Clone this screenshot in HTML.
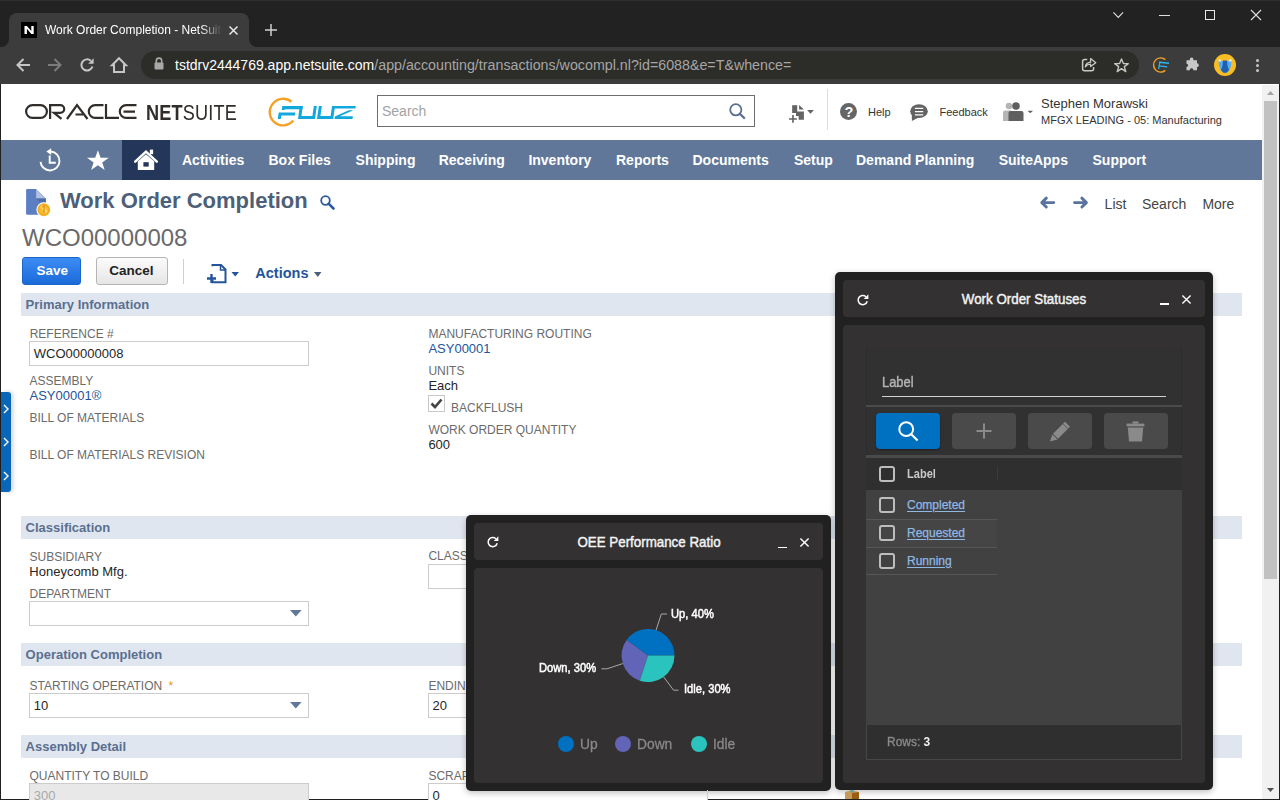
<!DOCTYPE html>
<html><head><meta charset="utf-8">
<style>
*{box-sizing:border-box;margin:0;padding:0}
html,body{width:1280px;height:800px;overflow:hidden;background:#fff;font-family:"Liberation Sans",sans-serif}
.a{position:absolute}
.t{position:absolute;white-space:nowrap}
svg{overflow:visible}
</style></head><body>
<div class="a" style="left:0px;top:0px;width:1280px;height:84px;background:#222222;"></div>
<div class="a" style="left:0px;top:0px;width:1280px;height:1px;background:#2e2e2e;"></div>
<div class="a" style="left:9px;top:13px;width:240px;height:34px;background:#3c3c3c;border-radius:8px 8px 0 0"></div>
<div class="a" style="left:1px;top:39px;width:8px;height:8px;background:#3c3c3c;"></div>
<div class="a" style="left:-7px;top:31px;width:16px;height:16px;background:#222222;border-radius:50%"></div>
<div class="a" style="left:249px;top:39px;width:8px;height:8px;background:#3c3c3c;"></div>
<div class="a" style="left:249px;top:31px;width:16px;height:16px;background:#222222;border-radius:50%"></div>
<div class="a" style="left:0px;top:47px;width:1280px;height:37px;background:#3c3c3c;"></div>
<div class="a" style="left:21px;top:22px;width:16px;height:16px;background:#000;"></div>
<svg class="a" style="left:16px;top:18px" width="30" height="24" viewBox="16 18 30 24"><path d="M24.5 33.9V26H26.9L31.3 31.1V26H33.7V33.9H31.3L26.9 28.8V33.9Z" fill="#fff"/></svg><div class="t" style="left:45px;top:23.84px;font-size:12px;line-height:12px;color:#ffffff;font-weight:normal;width:177px;overflow:hidden;-webkit-mask-image:linear-gradient(90deg,#000 88%,transparent 100%)">Work Order Completion - NetSuite</div>
<svg class="a" style="left:229px;top:25.5px" width="9" height="9" viewBox="0 0 9 9"><path d="M0.5 0.5L8.5 8.5M8.5 0.5L0.5 8.5" stroke="#e8e8e8" stroke-width="1.5"/></svg>
<svg class="a" style="left:265px;top:24px" width="12" height="12" viewBox="0 0 12 12"><path d="M6 0V12M0 6H12" stroke="#d0d0d0" stroke-width="1.5"/></svg>
<svg class="a" style="left:1112.7px;top:12px" width="10.5" height="6" viewBox="0 0 10.5 6"><path d="M0.4 0.4L5.25 5.4L10.1 0.4" stroke="#e0e0e0" stroke-width="1.1" fill="none"/></svg>
<div class="a" style="left:1159px;top:15px;width:11px;height:1px;background:#e0e0e0;"></div>
<div class="a" style="left:1205px;top:10px;width:10px;height:10px;background:transparent;border:1px solid #e8e8e8"></div>
<svg class="a" style="left:1251px;top:10px" width="10" height="10" viewBox="0 0 10 10"><path d="M0 0L10 10M10 0L0 10" stroke="#e0e0e0" stroke-width="1.1"/></svg>
<svg class="a" style="left:16px;top:58px" width="14" height="14" viewBox="0 0 14 14"><path d="M14 7H1.8M7.5 1L1.5 7L7.5 13" stroke="#c6c6c6" stroke-width="2" fill="none"/></svg>
<svg class="a" style="left:48px;top:58px" width="14" height="14" viewBox="0 0 14 14"><path d="M0 7H12.2M6.5 1L12.5 7L6.5 13" stroke="#7c7c7c" stroke-width="2" fill="none"/></svg>
<svg class="a" style="left:80px;top:58px" width="14" height="14" viewBox="0 0 14 14"><path d="M12.4 8.5A5.6 5.6 0 1 1 10.8 2.8" stroke="#c6c6c6" stroke-width="2" fill="none"/><path d="M13.6 0.3V5.8H8.1Z" fill="#c6c6c6"/></svg>
<svg class="a" style="left:111px;top:57px" width="16" height="16" viewBox="0 0 16 16"><path d="M8 1.2L15 8.2H13V15H3V8.2H1Z" stroke="#c6c6c6" stroke-width="2" fill="none" stroke-linejoin="miter"/></svg>
<div class="a" style="left:141px;top:51px;width:998px;height:28px;background:#2c2c28;border-radius:14px"></div>
<svg class="a" style="left:154px;top:57px" width="10" height="13" viewBox="0 0 10 13"><path d="M2.3 6V3.8A2.7 2.7 0 0 1 7.7 3.8V6" stroke="#a8a8a8" stroke-width="1.6" fill="none"/><rect x="0.5" y="5.6" width="9" height="7" rx="1" fill="#a8a8a8"/></svg>
<div class="t" style="left:175px;top:58.15px;font-size:14px;line-height:14px;color:#ffffff;font-weight:normal;">tstdrv2444769.app.netsuite.com<span style="color:#a6a6a6;font-size:14.25px">/app/accounting/transactions/wocompl.nl?id=6088&amp;e=T&amp;whence=</span></div>
<svg class="a" style="left:1076px;top:52px" width="30" height="26" viewBox="1076 52 30 26"><path d="M1087.2 59.6H1084.6Q1082.6 59.6 1082.6 61.6V68.8Q1082.6 70.8 1084.6 70.8H1091.6Q1093.6 70.8 1093.6 68.8V67" fill="none" stroke="#c8c8c8" stroke-width="1.5"/><path d="M1085.3 66.8Q1086 62.6 1090.6 62.2V58.6L1095.8 62.7L1090.6 66.6V64.2Q1087.4 64.2 1085.3 66.8Z" fill="none" stroke="#c8c8c8" stroke-width="1.3" stroke-linejoin="round"/></svg>
<svg class="a" style="left:1114px;top:57.5px" width="15" height="15" viewBox="0 0 15 15"><path d="M7.5 1L9.4 5.6H14.3L10.3 8.6L11.8 13.6L7.5 10.6L3.2 13.6L4.7 8.6L0.7 5.6H5.6Z" stroke="#c6c6c6" stroke-width="1.4" fill="none" stroke-linejoin="round"/></svg>
<svg class="a" style="left:1148px;top:52px" width="96" height="26" viewBox="1148 52 96 26"><path d="M1165.3 59.6A7.1 7.1 0 1 0 1165.3 70.4" fill="none" stroke="#f5a623" stroke-width="1.4"/><path d="M1159.4 61.4L1169.2 62.6L1168.9 64L1159.1 62.9Z" fill="#29b6f0"/><path d="M1159 65.2L1167.3 66.2L1167 67.6L1158.8 66.6Z" fill="#29b6f0"/><path d="M1159.4 61.4L1160.6 61.6L1159.2 69.3L1158 69.1Z" fill="#29b6f0"/><path d="M1189.8 59.2A1.8 1.8 0 0 1 1193.4 59.2V60.2H1197V63.3A1.8 1.8 0 0 1 1197 67V70.2H1193.3V69.4A1.8 1.8 0 0 0 1189.9 69.4V70.2H1186.5V66.9A1.6 1.6 0 0 0 1186.5 63.7V60.2H1189.8Z" fill="#c8c8c8"/><circle cx="1225" cy="65" r="11" fill="#f9bd24"/><path d="M1218.5 61H1231.5L1231 66L1229 71L1226.5 72.5H1223.5L1221 71L1219 66Z" fill="#5aaaf0"/><path d="M1223 60.5H1227L1227.5 66L1229 70L1226.5 72.8H1223.5L1221 70L1222.5 66Z" fill="#1e5fae"/><path d="M1219 58.8L1221.2 60.2V61.5H1218.3ZM1231 58.8L1228.8 60.2V61.5H1231.7Z" fill="#e8f0f8"/></svg>
<div class="a" style="left:1255.7px;top:58.9px;width:3.4px;height:3.4px;background:#c6c6c6;border-radius:50%"></div>
<div class="a" style="left:1255.7px;top:63.8px;width:3.4px;height:3.4px;background:#c6c6c6;border-radius:50%"></div>
<div class="a" style="left:1255.7px;top:68.7px;width:3.4px;height:3.4px;background:#c6c6c6;border-radius:50%"></div>
<div class="a" style="left:0px;top:84px;width:1px;height:716px;background:#202020;"></div>
<div class="a" style="left:1279px;top:84px;width:1px;height:716px;background:#202020;"></div>
<div class="a" style="left:0px;top:799px;width:1280px;height:1px;background:#202020;"></div>
<div class="a" style="left:1262px;top:85px;width:17px;height:714px;background:#f1f1f1;"></div>
<div class="a" style="left:1264px;top:101px;width:13px;height:478px;background:#c1c1c1;"></div>
<svg class="a" style="left:1267px;top:91px" width="7" height="4" viewBox="0 0 7 4"><path d="M0 4L3.5 0L7 4Z" fill="#a3a3a3"/></svg>
<svg class="a" style="left:1267px;top:788px" width="7" height="4" viewBox="0 0 7 4"><path d="M0 0L3.5 4L7 0Z" fill="#505050"/></svg>
<svg class="a" style="left:25px;top:104px" width="112" height="16" viewBox="0 0 112 16"><g fill="none" stroke="#312d2a" stroke-width="2.2"><path d="M7.5 1.1H15.5A6.4 6.4 0 0 1 15.5 13.9H7.5A6.4 6.4 0 0 1 7.5 1.1Z"/><path d="M25.1 15V1.1H35.3A3.9 3.9 0 0 1 35.3 8.9H29L36.5 14.9"/><path d="M42 15L52 1.1L62.5 15M50.5 10.5H58"/><path d="M78.5 1.1H70.2A6.4 6.4 0 0 0 70.2 13.9H78.5"/><path d="M81 0V13.9H94"/><path d="M111.5 1.1H101.2A5.4 5.4 0 0 0 101.2 13.9H111.5M98.5 7.6H110"/></g></svg>
<div class="t" style="left:146px;top:101.55px;font-size:21.2px;line-height:21.2px;color:#312d2a;font-weight:normal;transform:scaleX(0.855);transform-origin:0 0;letter-spacing:0.2px"><b>NET</b>SUITE</div>
<svg class="a" style="left:260px;top:92px" width="110" height="40" viewBox="260 92 110 40"><path d="M291.5 101.8A13.3 13.3 0 1 0 293.3 120.6" fill="none" stroke="#f4a024" stroke-width="2.4"/><g fill="#12a8dc" transform="translate(0 119) skewX(-8) translate(0 -119)"><path d="M280.5 106H301V109.3H283.5V110H280.5Z"/><path d="M277.8 112.6H294.5V115.4H280.8V119H277.8Z"/><path d="M298 106H301V116H312V106H315V119H298Z"/><path d="M317 106H320V116H330.2V106H333.2V119H317Z"/><path d="M331 106H354V108.6H331Z"/><path d="M347.5 110.2H352L339.5 116.2H352.5V119H334.5V116.4Z"/></g></svg>
<div class="a" style="left:377px;top:95px;width:378px;height:32px;background:#fff;border:1px solid #6e6e6e"></div>
<div class="t" style="left:382px;top:104.15px;font-size:14px;line-height:14px;color:#a3a3a3;font-weight:normal;">Search</div>
<svg class="a" style="left:729px;top:103px" width="17" height="17" viewBox="0 0 17 17"><circle cx="6.8" cy="6.8" r="5.6" fill="none" stroke="#5a6f8f" stroke-width="1.8"/><path d="M10.8 10.8L15.8 15.6" stroke="#5a6f8f" stroke-width="2.2"/></svg>
<svg class="a" style="left:785px;top:100px" width="35" height="26" viewBox="785 100 35 26"><path d="M792.15 105.2H797.2V113H792.15Z" fill="#646464"/><path d="M799.1 105L803.9 109.6H799.1Z" fill="#646464"/><path d="M796 111.4H803.9V119.7H798.65V115.9H796Z" fill="#646464"/><path d="M789.1 118.2H796.9V119.8H789.1ZM792.15 115.1H793.8V122.75H792.15Z" fill="#646464"/><path d="M807.1 110.1H813.9L810.5 113.8Z" fill="#646464"/></svg>
<div class="a" style="left:827px;top:89px;width:1px;height:41px;background:#dddddd;"></div>
<div class="a" style="left:840px;top:103px;width:17px;height:17px;background:#666;border-radius:50%"></div>
<div class="t" style="left:844.6px;top:104.93px;font-size:14.5px;line-height:14.5px;color:#fff;font-weight:bold;">?</div>
<div class="t" style="left:868px;top:106.69px;font-size:11px;line-height:11px;color:#333;font-weight:normal;">Help</div>
<svg class="a" style="left:900px;top:98px" width="40" height="28" viewBox="900 98 40 28"><ellipse cx="919" cy="111.2" rx="8.8" ry="6.9" fill="#636363"/><path d="M911.8 114.5L911.9 120.9L919 117.2Z" fill="#636363"/><path d="M914.9 108.3H923.2M914.9 111.6H923.2M914.9 114.9H923.2" stroke="#fff" stroke-width="1.3"/></svg><div class="t" style="left:939.5px;top:106.69px;font-size:11px;line-height:11px;color:#333;font-weight:normal;">Feedback</div>
<svg class="a" style="left:1002px;top:102px" width="36" height="19" viewBox="0 0 36 19"><circle cx="7" cy="4" r="3.3" fill="#b5b5b5"/><path d="M1 19V10.5Q1 8.5 3 8.5H9V19Z" fill="#b5b5b5"/><circle cx="14" cy="4" r="3.8" fill="#5f5f5f"/><path d="M6.5 19V11Q6.5 9 8.5 9H19.5Q21.5 9 21.5 11V19Z" fill="#5f5f5f"/><path d="M25.5 8.7H31L28.25 11.3Z" fill="#5f5f5f"/></svg>
<div class="t" style="left:1041px;top:96.50px;font-size:13px;line-height:13px;color:#333;font-weight:normal;">Stephen Morawski</div>
<div class="t" style="left:1041px;top:114.79px;font-size:11px;line-height:11px;color:#333;font-weight:normal;">MFGX LEADING - 05: Manufacturing</div>
<div class="a" style="left:1px;top:140px;width:1261px;height:40px;background:#607799;"></div>
<div class="a" style="left:122px;top:140px;width:48px;height:40px;background:#243659;"></div>
<svg class="a" style="left:30px;top:142px" width="140" height="36" viewBox="30 142 140 36"><path d="M50.83 151.5A9.5 9.5 0 1 1 40.54 161.83" fill="none" stroke="#fff" stroke-width="1.9"/><path d="M46.3 151.6L51.2 148.3V154.9Z" fill="#fff"/><path d="M49.7 155.4V162.8H55.8" fill="none" stroke="#fff" stroke-width="1.9"/><path d="M97.9 150.2L100.6 157.8H108.8L102.2 162.5L104.7 170L97.9 165.3L91.1 170L93.6 162.5L87 157.8H95.2Z" fill="#fff"/><path d="M135.2 161.6L146 151.6L156.8 161.6" fill="none" stroke="#fff" stroke-width="2.5" stroke-linecap="round" stroke-linejoin="miter"/><rect x="149.8" y="149.6" width="3.3" height="4.6" fill="#fff"/><path d="M137.8 161.2L146 154.2L154.2 161.2V170H137.8Z" fill="#fff"/><rect x="143.4" y="162.2" width="5.3" height="4.4" fill="#243659"/></svg>
<div class="t" style="left:182px;top:153.35px;font-size:14px;line-height:14px;color:#fff;font-weight:bold;">Activities</div>
<div class="t" style="left:268.5px;top:153.35px;font-size:14px;line-height:14px;color:#fff;font-weight:bold;">Box Files</div>
<div class="t" style="left:355.6px;top:153.35px;font-size:14px;line-height:14px;color:#fff;font-weight:bold;">Shipping</div>
<div class="t" style="left:438.7px;top:153.35px;font-size:14px;line-height:14px;color:#fff;font-weight:bold;">Receiving</div>
<div class="t" style="left:528.4px;top:153.35px;font-size:14px;line-height:14px;color:#fff;font-weight:bold;">Inventory</div>
<div class="t" style="left:616px;top:153.35px;font-size:14px;line-height:14px;color:#fff;font-weight:bold;">Reports</div>
<div class="t" style="left:692.5px;top:153.35px;font-size:14px;line-height:14px;color:#fff;font-weight:bold;">Documents</div>
<div class="t" style="left:794px;top:153.35px;font-size:14px;line-height:14px;color:#fff;font-weight:bold;">Setup</div>
<div class="t" style="left:856px;top:153.35px;font-size:14px;line-height:14px;color:#fff;font-weight:bold;">Demand Planning</div>
<div class="t" style="left:998.7px;top:153.35px;font-size:14px;line-height:14px;color:#fff;font-weight:bold;">SuiteApps</div>
<div class="t" style="left:1092.5px;top:153.35px;font-size:14px;line-height:14px;color:#fff;font-weight:bold;">Support</div>
<svg class="a" style="left:20px;top:185px" width="40" height="35" viewBox="20 185 40 35"><path d="M27.2 188.9H36.1L45.8 198.6V213.7Q45.8 214.75 44.8 214.75H27.2Q26.1 214.75 26.1 213.7V190Q26.1 188.9 27.2 188.9Z" fill="#5b7fc2"/><path d="M36.1 188.9L45.8 198.6H36.1Z" fill="#b1c1e1"/><path d="M36.1 198.6H45.8V201.9H39.5Z" fill="#4d6ca8"/><circle cx="43.8" cy="209.7" r="7.4" fill="#fff"/><circle cx="43.8" cy="209.7" r="6.5" fill="#f8bd2c"/><path d="M39.5 206L46 213.5L47.5 211L42 204.5Z" fill="#fde49a" opacity="0.7"/><circle cx="43.8" cy="209.7" r="5.1" fill="none" stroke="#eba322" stroke-width="1"/><path d="M42.2 207.3L44.1 206V213" fill="none" stroke="#e39514" stroke-width="1.3"/></svg>
<div class="t" style="left:60px;top:190.18px;font-size:22px;line-height:22px;color:#4d5f79;font-weight:bold;">Work Order Completion</div>
<svg class="a" style="left:320px;top:195px" width="15" height="15" viewBox="0 0 15 15"><circle cx="5.5" cy="5.5" r="4.3" fill="none" stroke="#2d5a9b" stroke-width="1.8"/><path d="M8.6 8.6L13.5 13.5" stroke="#2d5a9b" stroke-width="2.6" stroke-linecap="round"/></svg>
<svg class="a" style="left:1030px;top:188px" width="70" height="28" viewBox="1030 188 70 28"><path d="M1053.8 202.6H1042.2M1046.3 198.1L1041.8 202.6L1046.3 207" fill="none" stroke="#58739e" stroke-width="2.9" stroke-linecap="round" stroke-linejoin="round"/><path d="M1074.5 202.6H1086.1M1081.9 198.1L1086.4 202.6L1081.9 207" fill="none" stroke="#58739e" stroke-width="2.9" stroke-linecap="round" stroke-linejoin="round"/></svg>
<div class="t" style="left:1104.6px;top:196.65px;font-size:14px;line-height:14px;color:#444;font-weight:normal;">List</div>
<div class="t" style="left:1142px;top:196.65px;font-size:14px;line-height:14px;color:#444;font-weight:normal;">Search</div>
<div class="t" style="left:1202.4px;top:196.65px;font-size:14px;line-height:14px;color:#444;font-weight:normal;">More</div>
<div class="t" style="left:22px;top:225.68px;font-size:24px;line-height:24px;color:#6a6a6a;font-weight:normal;">WCO00000008</div>
<div class="a" style="left:22px;top:257px;width:59px;height:28px;background:linear-gradient(#3d8cf5,#1a6ad9);border:1px solid #1b64c8;border-radius:3px"></div>
<div class="t" style="left:36.5px;top:264.17px;font-size:13.5px;line-height:13.5px;color:#fff;font-weight:bold;">Save</div>
<div class="a" style="left:96px;top:257px;width:72px;height:28px;background:linear-gradient(#fbfbfb,#e6e6e6);border:1px solid #b5b5b5;border-radius:3px"></div>
<div class="t" style="left:109.3px;top:264.17px;font-size:13.5px;line-height:13.5px;color:#222;font-weight:bold;">Cancel</div>
<div class="a" style="left:183px;top:259px;width:1px;height:25px;background:#cfcfcf;"></div>
<svg class="a" style="left:206px;top:264px" width="34" height="20" viewBox="0 0 34 20"><path d="M6.5 2.2V1H15L19.5 5.5V18.2H6.5V16" fill="none" stroke="#24549c" stroke-width="2"/><path d="M14.5 1V6H19.5" fill="none" stroke="#24549c" stroke-width="1.5"/><path d="M1 14.5H10M5.5 10V19" stroke="#24549c" stroke-width="2.4"/><path d="M25.5 8H33L29.25 12.5Z" fill="#24549c"/></svg>
<div class="t" style="left:255.3px;top:266.23px;font-size:14.5px;line-height:14.5px;color:#24549c;font-weight:bold;">Actions</div>
<svg class="a" style="left:313.5px;top:272px" width="8" height="5" viewBox="0 0 8 5"><path d="M0 0H7.5L3.75 5Z" fill="#4d5f79"/></svg>
<div class="a" style="left:21px;top:293px;width:1221px;height:23px;background:#e0e6ef;"></div>
<div class="t" style="left:25.6px;top:298.10px;font-size:13px;line-height:13px;color:#5a6f8f;font-weight:bold;">Primary Information</div>
<div class="t" style="left:29.7px;top:327.59px;font-size:12px;line-height:12px;color:#6b6b6b;font-weight:normal;">REFERENCE #</div>
<div class="a" style="left:29px;top:341px;width:280px;height:25px;background:#fff;border:1px solid #cccccc"></div>
<div class="t" style="left:33.75px;top:346.50px;font-size:13px;line-height:13px;color:#262626;font-weight:normal;">WCO00000008</div>
<div class="t" style="left:29.5px;top:374.59px;font-size:12px;line-height:12px;color:#6b6b6b;font-weight:normal;">ASSEMBLY</div>
<div class="t" style="left:29.5px;top:388.75px;font-size:13px;line-height:13px;color:#24549c;font-weight:normal;">ASY00001&reg;</div>
<div class="t" style="left:29.5px;top:412.04px;font-size:12px;line-height:12px;color:#6b6b6b;font-weight:normal;">BILL OF MATERIALS</div>
<div class="t" style="left:29.5px;top:449.04px;font-size:12px;line-height:12px;color:#6b6b6b;font-weight:normal;">BILL OF MATERIALS REVISION</div>
<div class="t" style="left:428.4px;top:327.54px;font-size:12px;line-height:12px;color:#6b6b6b;font-weight:normal;">MANUFACTURING ROUTING</div>
<div class="t" style="left:428.4px;top:341.60px;font-size:13px;line-height:13px;color:#24549c;font-weight:normal;">ASY00001</div>
<div class="t" style="left:428.4px;top:365.34px;font-size:12px;line-height:12px;color:#6b6b6b;font-weight:normal;">UNITS</div>
<div class="t" style="left:428.4px;top:378.70px;font-size:13px;line-height:13px;color:#262626;font-weight:normal;">Each</div>
<div class="a" style="left:428px;top:395px;width:17px;height:17px;background:#fff;border:1px solid #c8c8c8"></div>
<svg class="a" style="left:430px;top:398px" width="13" height="11" viewBox="0 0 13 11"><path d="M1.5 5.5L5 9L11.5 1.5" fill="none" stroke="#444" stroke-width="2.6"/></svg>
<div class="t" style="left:451px;top:402.24px;font-size:12px;line-height:12px;color:#6b6b6b;font-weight:normal;">BACKFLUSH</div>
<div class="t" style="left:428.4px;top:424.24px;font-size:12px;line-height:12px;color:#6b6b6b;font-weight:normal;">WORK ORDER QUANTITY</div>
<div class="t" style="left:428.4px;top:437.50px;font-size:13px;line-height:13px;color:#262626;font-weight:normal;">600</div>
<div class="a" style="left:21px;top:516px;width:1221px;height:23px;background:#e0e6ef;"></div>
<div class="t" style="left:25.6px;top:521.10px;font-size:13px;line-height:13px;color:#5a6f8f;font-weight:bold;">Classification</div>
<div class="t" style="left:29.5px;top:550.54px;font-size:12px;line-height:12px;color:#6b6b6b;font-weight:normal;">SUBSIDIARY</div>
<div class="t" style="left:29.3px;top:565.00px;font-size:13px;line-height:13px;color:#262626;font-weight:normal;">Honeycomb Mfg.</div>
<div class="t" style="left:29.5px;top:587.59px;font-size:12px;line-height:12px;color:#6b6b6b;font-weight:normal;">DEPARTMENT</div>
<div class="a" style="left:29px;top:601px;width:280px;height:25px;background:#fff;border:1px solid #cccccc"></div>
<svg class="a" style="left:290px;top:610px" width="12" height="7" viewBox="0 0 12 7"><path d="M0 0H11.6L5.8 6.5Z" fill="#607799"/></svg>
<div class="t" style="left:428.4px;top:550.44px;font-size:12px;line-height:12px;color:#6b6b6b;font-weight:normal;">CLASS</div>
<div class="a" style="left:428px;top:564px;width:280px;height:25px;background:#fff;border:1px solid #cccccc"></div>
<svg class="a" style="left:689px;top:573px" width="12" height="7" viewBox="0 0 12 7"><path d="M0 0H11.6L5.8 6.5Z" fill="#607799"/></svg>
<div class="a" style="left:21px;top:643px;width:1221px;height:23px;background:#e0e6ef;"></div>
<div class="t" style="left:25.6px;top:648.10px;font-size:13px;line-height:13px;color:#5a6f8f;font-weight:bold;">Operation Completion</div>
<div class="t" style="left:29.5px;top:680.34px;font-size:12px;line-height:12px;color:#6b6b6b;font-weight:normal;">STARTING OPERATION <span style="color:#e2951e;margin-left:3px">*</span></div>
<div class="a" style="left:29px;top:693px;width:280px;height:25px;background:#fff;border:1px solid #cccccc"></div>
<svg class="a" style="left:290px;top:702px" width="12" height="7" viewBox="0 0 12 7"><path d="M0 0H11.6L5.8 6.5Z" fill="#607799"/></svg>
<div class="t" style="left:33.75px;top:699.20px;font-size:13px;line-height:13px;color:#262626;font-weight:normal;">10</div>
<div class="t" style="left:428.4px;top:680.34px;font-size:12px;line-height:12px;color:#6b6b6b;font-weight:normal;">ENDING OPERATION</div>
<div class="a" style="left:428px;top:693px;width:280px;height:25px;background:#fff;border:1px solid #cccccc"></div>
<svg class="a" style="left:689px;top:702px" width="12" height="7" viewBox="0 0 12 7"><path d="M0 0H11.6L5.8 6.5Z" fill="#607799"/></svg>
<div class="t" style="left:432.5px;top:699.20px;font-size:13px;line-height:13px;color:#262626;font-weight:normal;">20</div>
<div class="a" style="left:21px;top:735px;width:1221px;height:23px;background:#e0e6ef;"></div>
<div class="t" style="left:25.6px;top:740.10px;font-size:13px;line-height:13px;color:#5a6f8f;font-weight:bold;">Assembly Detail</div>
<div class="t" style="left:29.5px;top:769.59px;font-size:12px;line-height:12px;color:#6b6b6b;font-weight:normal;">QUANTITY TO BUILD</div>
<div class="a" style="left:29px;top:783px;width:280px;height:25px;background:#e8e8e8;border:1px solid #cccccc"></div>
<div class="t" style="left:33.75px;top:789.00px;font-size:13px;line-height:13px;color:#a8a8a8;font-weight:normal;">300</div>
<div class="t" style="left:428.4px;top:769.59px;font-size:12px;line-height:12px;color:#6b6b6b;font-weight:normal;">SCRAP QUANTITY</div>
<div class="a" style="left:428px;top:783px;width:280px;height:25px;background:#fff;border:1px solid #cccccc"></div>
<div class="t" style="left:432.5px;top:789.00px;font-size:13px;line-height:13px;color:#262626;font-weight:normal;">0</div>
<div class="a" style="left:1px;top:392px;width:10px;height:100px;background:#0a66b8;border-radius:0 3px 3px 0;box-shadow:2px 0 4px rgba(0,0,0,0.18)"></div>
<svg class="a" style="left:3px;top:403.7px" width="6" height="10" viewBox="0 0 6 10"><path d="M1 1L5 5L1 9" fill="none" stroke="#fff" stroke-width="1.4"/></svg>
<svg class="a" style="left:3px;top:436.8px" width="6" height="10" viewBox="0 0 6 10"><path d="M1 1L5 5L1 9" fill="none" stroke="#fff" stroke-width="1.4"/></svg>
<svg class="a" style="left:3px;top:470.6px" width="6" height="10" viewBox="0 0 6 10"><path d="M1 1L5 5L1 9" fill="none" stroke="#fff" stroke-width="1.4"/></svg>
<div class="a" style="left:466px;top:515px;width:365px;height:276px;background:#212121;border-radius:5px;box-shadow:0 2px 6px rgba(0,0,0,0.25)"></div>
<div class="a" style="left:474px;top:523px;width:349px;height:37px;background:#333132;border-radius:4px"></div>
<div class="a" style="left:474px;top:568px;width:349px;height:215px;background:#333132;border-radius:4px"></div>
<svg class="a" style="left:487px;top:536px" width="12" height="12" viewBox="0 0 12 12"><path d="M10.2 7.2A4.6 4.6 0 1 1 8.9 2.7" fill="none" stroke="#fff" stroke-width="1.5"/><path d="M11.4 0.2V4.9H6.7Z" fill="#fff"/></svg>
<div class="t" style="left:648.5px;top:533.90px;font-size:15px;line-height:15px;color:#f4f4f4;font-weight:normal;transform:translateX(-50%) scaleX(0.89);-webkit-text-stroke:0.45px #f4f4f4;">OEE Performance Ratio</div>
<div class="a" style="left:778px;top:546.5px;width:8.5px;height:1.6px;background:#fff;"></div>
<svg class="a" style="left:799.5px;top:537.5px" width="9" height="9" viewBox="0 0 9 9"><path d="M0.4 0.4L8.6 8.6M8.6 0.4L0.4 8.6" stroke="#fff" stroke-width="1.4"/></svg>
<svg class="a" style="left:0;top:0" width="1280" height="800" viewBox="0 0 1280 800"><path d="M648 655.5L674.50 655.50A26.5 26.5 0 0 0 626.56 639.92Z" fill="#0070c0"/><path d="M648 655.5L626.56 639.92A26.5 26.5 0 0 0 639.81 680.70Z" fill="#6264b8"/><path d="M648 655.5L639.81 680.70A26.5 26.5 0 0 0 674.50 655.50Z" fill="#2ac3bd"/><path d="M656 630.3L661.3 614H667M622.7 663.6L607 668.8H601.4M663.7 677L673.6 690.2H678.5" fill="none" stroke="#aaa" stroke-width="1"/></svg>
<div class="t" style="left:671.4px;top:607.84px;font-size:12px;line-height:12px;color:#fff;font-weight:normal;transform:scaleX(0.93);transform-origin:0 0;-webkit-text-stroke:0.5px #fff">Up, 40%</div>
<div class="t" style="left:539px;top:662.24px;font-size:12px;line-height:12px;color:#fff;font-weight:normal;transform:scaleX(0.93);transform-origin:0 0;-webkit-text-stroke:0.5px #fff">Down, 30%</div>
<div class="t" style="left:683.7px;top:683.24px;font-size:12px;line-height:12px;color:#fff;font-weight:normal;transform:scaleX(0.93);transform-origin:0 0;-webkit-text-stroke:0.5px #fff">Idle, 30%</div>
<div class="a" style="left:558px;top:736px;width:16px;height:16px;background:#0070c0;border-radius:50%"></div>
<div class="t" style="left:579.7px;top:736.05px;font-size:15px;line-height:15px;color:#8a8a8a;font-weight:normal;transform:scaleX(0.92);transform-origin:0 0;-webkit-text-stroke:0.3px #8a8a8a">Up</div>
<div class="a" style="left:615px;top:736px;width:16px;height:16px;background:#6264b8;border-radius:50%"></div>
<div class="t" style="left:636.7px;top:736.05px;font-size:15px;line-height:15px;color:#8a8a8a;font-weight:normal;transform:scaleX(0.92);transform-origin:0 0;-webkit-text-stroke:0.3px #8a8a8a">Down</div>
<div class="a" style="left:691px;top:736px;width:16px;height:16px;background:#2ac3bd;border-radius:50%"></div>
<div class="t" style="left:713.3px;top:736.05px;font-size:15px;line-height:15px;color:#8a8a8a;font-weight:normal;transform:scaleX(0.92);transform-origin:0 0;-webkit-text-stroke:0.3px #8a8a8a">Idle</div>
<div class="a" style="left:835px;top:272px;width:378px;height:518px;background:#212121;border-radius:5px;box-shadow:0 2px 6px rgba(0,0,0,0.25)"></div>
<div class="a" style="left:843px;top:280px;width:362px;height:37px;background:#333132;border-radius:4px"></div>
<div class="a" style="left:843px;top:325px;width:362px;height:458px;background:#333132;border-radius:4px"></div>
<svg class="a" style="left:856.5px;top:293.5px" width="12" height="12" viewBox="0 0 12 12"><path d="M10.2 7.2A4.6 4.6 0 1 1 8.9 2.7" fill="none" stroke="#fff" stroke-width="1.5"/><path d="M11.4 0.2V4.9H6.7Z" fill="#fff"/></svg>
<div class="t" style="left:1024px;top:291.20px;font-size:15px;line-height:15px;color:#f4f4f4;font-weight:normal;transform:translateX(-50%) scaleX(0.89);-webkit-text-stroke:0.45px #f4f4f4;">Work Order Statuses</div>
<div class="a" style="left:1160px;top:303px;width:8.5px;height:1.6px;background:#fff;"></div>
<svg class="a" style="left:1181.7px;top:294.5px" width="9" height="9" viewBox="0 0 9 9"><path d="M0.4 0.4L8.6 8.6M8.6 0.4L0.4 8.6" stroke="#fff" stroke-width="1.4"/></svg>
<div class="a" style="left:866px;top:348px;width:316px;height:412px;background:#323131;border-left:1px solid #2c2c2c;border-right:1px solid #2c2c2c"></div>
<div class="t" style="left:882px;top:375.15px;font-size:14px;line-height:14px;color:#b4b4b4;font-weight:normal;transform:scaleX(0.92);transform-origin:0 0;-webkit-text-stroke:0.4px #b4b4b4">Label</div>
<div class="a" style="left:882px;top:395.5px;width:284px;height:1.6px;background:#d0d0d0;"></div>
<div class="a" style="left:866px;top:405px;width:316px;height:2px;background:#4a4a4a;"></div>
<div class="a" style="left:876px;top:413px;width:64px;height:36px;background:#0070c0;border-radius:4px;box-shadow:0 1px 2px rgba(0,0,0,0.4)"></div>
<svg class="a" style="left:897.5px;top:420.5px" width="21" height="21" viewBox="0 0 21 21"><circle cx="8.2" cy="8.2" r="6.9" fill="none" stroke="#fff" stroke-width="2"/><path d="M13 13L19.6 19.6" stroke="#fff" stroke-width="2.1"/></svg>
<div class="a" style="left:952px;top:413px;width:64px;height:36px;background:#4b4a4a;border-radius:4px"></div>
<div class="a" style="left:1028px;top:413px;width:64px;height:36px;background:#4b4a4a;border-radius:4px"></div>
<div class="a" style="left:1104px;top:413px;width:64px;height:36px;background:#4b4a4a;border-radius:4px"></div>
<svg class="a" style="left:975px;top:422px" width="18" height="18" viewBox="0 0 18 18"><path d="M9 1.5V16.5M1.5 9H16.5" stroke="#8a8a8a" stroke-width="2"/></svg>
<svg class="a" style="left:1049px;top:420.5px" width="22" height="21" viewBox="0 0 22 21"><path d="M16 0.8L21 5.8L9 17.8L4 12.8Z" fill="#8a8a8a"/><path d="M3.5 13.5L8.5 18.5L0.8 20.5Z" fill="#8a8a8a"/><path d="M14 2.8L19 7.8" stroke="#4b4a4a" stroke-width="0.8"/></svg>
<svg class="a" style="left:1126px;top:420.5px" width="19" height="21" viewBox="0 0 19 21"><path d="M0.6 2.6H18.4V5.4H0.6Z" fill="#8a8a8a"/><path d="M6.5 0.4H12.5V2.6H6.5Z" fill="#8a8a8a"/><path d="M1.8 6.5H17.2L16 20.5H3Z" fill="#8a8a8a"/></svg>
<div class="a" style="left:866px;top:455px;width:316px;height:2.5px;background:#4a4a4a;"></div>
<div class="a" style="left:866px;top:457.5px;width:316px;height:32.5px;background:#2f2f2f;"></div>
<div class="a" style="left:878.9px;top:466px;width:16.5px;height:16px;background:transparent;border:2px solid #bdbdbd;border-radius:3px"></div>
<div class="t" style="left:907px;top:467.84px;font-size:12px;line-height:12px;color:#c8c8c8;font-weight:bold;transform:scaleX(0.92);transform-origin:0 0">Label</div>
<div class="a" style="left:996.5px;top:466px;width:1px;height:15px;background:#3a3a3a;"></div>
<div class="a" style="left:866px;top:490px;width:316px;height:235px;background:#414141;"></div>
<div class="a" style="left:866px;top:519px;width:131px;height:28px;background:#454545;"></div>
<div class="a" style="left:866px;top:519px;width:131px;height:1.2px;background:#565656;"></div>
<div class="a" style="left:866px;top:547px;width:131px;height:1.2px;background:#565656;"></div>
<div class="a" style="left:866px;top:574px;width:131px;height:1.2px;background:#565656;"></div>
<div class="a" style="left:878.9px;top:497px;width:16.5px;height:16px;background:transparent;border:2px solid #bdbdbd;border-radius:3px"></div>
<div class="t" style="left:907px;top:498.64px;font-size:12px;line-height:12px;color:#8fb8e6;font-weight:normal;-webkit-text-stroke:0.25px #8fb8e6"><span style="text-decoration:underline;text-underline-offset:2px">Completed</span></div>
<div class="a" style="left:878.9px;top:525px;width:16.5px;height:16px;background:transparent;border:2px solid #bdbdbd;border-radius:3px"></div>
<div class="t" style="left:907px;top:526.64px;font-size:12px;line-height:12px;color:#8fb8e6;font-weight:normal;-webkit-text-stroke:0.25px #8fb8e6"><span style="text-decoration:underline;text-underline-offset:2px">Requested</span></div>
<div class="a" style="left:878.9px;top:553px;width:16.5px;height:16px;background:transparent;border:2px solid #bdbdbd;border-radius:3px"></div>
<div class="t" style="left:907px;top:554.64px;font-size:12px;line-height:12px;color:#8fb8e6;font-weight:normal;-webkit-text-stroke:0.25px #8fb8e6"><span style="text-decoration:underline;text-underline-offset:2px">Running</span></div>
<div class="a" style="left:866px;top:725px;width:316px;height:35px;background:#2f2f2f;border:1px solid #474747;border-top:none"></div>
<div class="t" style="left:887px;top:735.00px;font-size:13px;line-height:13px;color:#8a8a8a;font-weight:normal;transform:scaleX(0.92);transform-origin:0 0;-webkit-text-stroke:0.35px #8a8a8a">Rows: <b style="color:#f0f0f0;-webkit-text-stroke:0">3</b></div>
<div class="a" style="left:707px;top:790px;width:1px;height:9px;background:#cfcfcf;"></div>
<svg class="a" style="left:845px;top:790px" width="14" height="9" viewBox="0 0 14 9"><path d="M0 2L7 0L14 2V9H0Z" fill="#c89a5a"/><path d="M7 3L14 2V9H7Z" fill="#9a5e12"/><path d="M5.5 0L7 2L8.5 0" stroke="#39a0c8" stroke-width="1.2" fill="none"/></svg>

</body></html>
